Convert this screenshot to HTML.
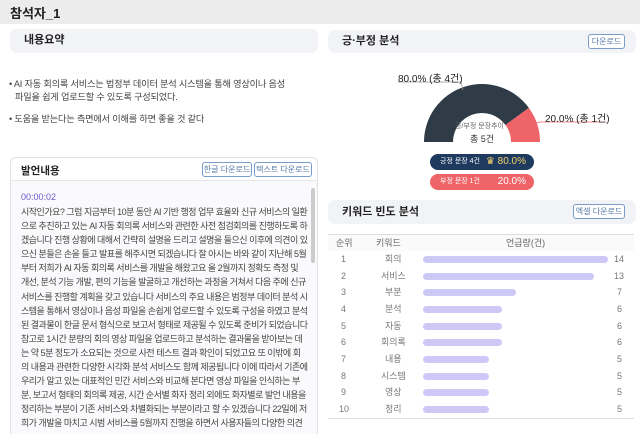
<!DOCTYPE html>
<html><head><meta charset="utf-8"><style>
*{margin:0;padding:0;box-sizing:border-box}
html,body{width:640px;height:434px;overflow:hidden}
body{background:#ececec;font-family:"Liberation Sans","Noto Sans CJK KR",sans-serif;color:#333;position:relative}
.abs{position:absolute}
.main{position:absolute;left:0;top:24px;width:640px;height:410px;background:#fff}
.hbox{position:absolute;background:#f2f3f6;border-radius:7px;font-size:11px;font-weight:bold;color:#222;padding-left:14px;line-height:23px}
.btn{position:absolute;border:1px solid #7a9cc8;border-radius:3px;background:#fff;color:#5577aa;font-size:8px;font-weight:normal;line-height:13px;text-align:center}
.t{font-size:9.2px;color:#444;white-space:nowrap;letter-spacing:-0.2px}
.sp{position:absolute;left:21px;top:205px;width:288px;height:229px;overflow:hidden;font-size:9px;letter-spacing:-0.5px;line-height:14.1px;color:#444;white-space:nowrap}
.row{position:absolute;left:328px;width:306px;height:17px;font-size:9px;color:#777;line-height:17px}
.row span{position:absolute;top:0}
.bar{position:absolute;left:95px;top:5px;height:7px;border-radius:4px;background:#cdc8f5}
</style></head><body>
<div class="abs" style="left:10px;top:3px;font-size:13px;font-weight:bold;color:#222">참석자_1</div>
<div class="main"></div>
<div class="hbox" style="left:10px;top:29px;width:308px;height:24px">내용요약</div>
<div class="abs t" style="left:9px;top:76px">• AI 자동 회의록 서비스는 법정부 데이터 분석 시스템을 통해 영상이나 음성</div>
<div class="abs t" style="left:15px;top:89px">파일을 쉽게 업로드할 수 있도록 구성되었다.</div>
<div class="abs t" style="left:9px;top:111px">• 도움을 받는다는 측면에서 이해를 하면 좋을 것 같다</div>
<div class="abs" style="left:10px;top:157px;width:308px;height:290px;border:1px solid #e2e2e6;border-radius:6px;background:#fafafc"></div>
<div class="abs" style="left:11px;top:158px;width:306px;height:23px;background:#fff;border-bottom:1px solid #e6e6ea;border-radius:6px 6px 0 0"></div>
<div class="abs" style="left:21px;top:163px;font-size:10.5px;font-weight:bold;color:#222">발언내용</div>
<div class="btn" style="left:202px;top:162px;width:50px;height:15px">한글 다운로드</div>
<div class="btn" style="left:254px;top:162px;width:58px;height:15px">텍스트 다운로드</div>
<div class="abs" style="left:311px;top:188px;width:4px;height:75px;background:#ccc;border-radius:2px"></div>
<div class="abs" style="left:21px;top:192px;font-size:9px;color:#6a5acd">00:00:02</div>
<div class="sp">시작인가요? 그럼 지금부터 10분 동안 AI 기반 행정 업무 효율와 신규 서비스의 일환<br>으로 추진하고 있는 AI 자동 회의록 서비스와 관련한 사전 점검회의를 진행하도록 하<br>겠습니다 진행 상황에 대해서 간략히 설명을 드리고 설명을 들으신 이후에 의견이 있<br>으신 분들은 손을 들고 발표를 해주시면 되겠습니다 잘 아시는 바와 같이 지난해 5월<br>부터 저희가 AI 자동 회의록 서비스를 개발을 해왔고요 올 2월까지 정확도 측정 및<br>개선, 분석 기능 개발, 편의 기능을 발굴하고 개선하는 과정을 거쳐서 다음 주에 신규<br>서비스를 진행할 계획을 갖고 있습니다 서비스의 주요 내용은 범정부 데이터 분석 시<br>스템을 통해서 영상이나 음성 파일을 손쉽게 업로드할 수 있도록 구성을 하였고 분석<br>된 결과물이 한글 문서 형식으로 보고서 형태로 제공될 수 있도록 준비가 되었습니다<br>참고로 1시간 분량의 회의 영상 파일을 업로드하고 분석하는 결과물을 받아보는 데<br>는 약 5분 정도가 소요되는 것으로 사전 테스트 결과 확인이 되었고요 또 이밖에 회<br>의 내용과 관련한 다양한 시각화 분석 서비스도 함께 제공됩니다 이에 따라서 기존에<br>우리가 알고 있는 대표적인 민간 서비스와 비교해 본다면 영상 파일을 인식하는 부<br>분, 보고서 형태의 회의록 제공, 시간 순서별 화자 정리 외에도 화자별로 발언 내용을<br>정리하는 부분이 기존 서비스와 차별화되는 부분이라고 할 수 있겠습니다 22일에 저<br>희가 개발을 마치고 시범 서비스를 5월까지 진행을 하면서 사용자들의 다양한 의견</div>

<div class="hbox" style="left:328px;top:30px;width:308px;height:23px">긍·부정 분석</div>
<div class="btn" style="left:588px;top:34px;width:37px;height:15px">다운로드</div>
<svg class="abs" style="left:0;top:0" width="640" height="200">
<path d="M424 142 A58 58 0 0 1 528.9 107.9 L505.5 125 A29 29 0 0 0 453 142 Z" fill="#2f3b47"/>
<path d="M528.9 107.9 A58 58 0 0 1 540 142 L511 142 A29 29 0 0 0 505.5 125 Z" fill="#ef6468"/>
<polyline points="398,82 461,82 463,90" fill="none" stroke="#999" stroke-width="0.7"/>
<polyline points="534,124 540,122 606,122" fill="none" stroke="#ef6468" stroke-width="0.7"/>
</svg>
<div class="abs" style="left:398px;top:70px;font-size:10px;color:#222">80.0% (총 4건)</div>
<div class="abs" style="left:545px;top:110px;font-size:10px;color:#222">20.0% (총 1건)</div>
<div class="abs" style="left:455px;top:121px;font-size:7px;color:#666">긍/부정 문장추이</div>
<div class="abs" style="left:470px;top:132px;font-size:9px;color:#333">총 5건</div>
<div class="abs" style="left:430px;top:154px;width:104px;height:16px;border-radius:8px;background:#1e3a5f;color:#fff;font-size:7px;line-height:16px;padding-left:10px">긍정 문장 4건<span style="position:absolute;right:8px;top:0;font-size:10px;color:#f5d26b">♛ 80.0%</span></div>
<div class="abs" style="left:430px;top:174px;width:104px;height:16px;border-radius:8px;background:#ef6468;color:#fff;font-size:7px;line-height:16px;padding-left:10px">부정 문장 1건<span style="position:absolute;right:8px;top:0;font-size:10px;color:#fff">20.0%</span></div>

<div class="hbox" style="left:328px;top:200px;width:308px;height:24px;line-height:24px">키워드 빈도 분석</div>
<div class="btn" style="left:573px;top:204px;width:52px;height:15px">엑셀 다운로드</div>
<div class="abs" style="left:328px;top:234px;width:306px;height:17px;border-top:1px solid #ddd;background:#fafafa;font-size:9px;color:#666;line-height:17px">
<span class="abs" style="left:8px;top:0">순위</span><span class="abs" style="left:48px;top:0">키워드</span><span class="abs" style="left:178px;top:0">언급량(건)</span></div>
<div class="row" style="top:251px"><span style="left:13px">1</span><span style="left:57px">회의</span><div class="bar" style="width:185px"></div><span style="left:286px">14</span></div>
<div class="row" style="top:268px"><span style="left:13px">2</span><span style="left:53px">서비스</span><div class="bar" style="width:171px"></div><span style="left:286px">13</span></div>
<div class="row" style="top:284px"><span style="left:13px">3</span><span style="left:57px">부분</span><div class="bar" style="width:93px"></div><span style="left:289px">7</span></div>
<div class="row" style="top:301px"><span style="left:13px">4</span><span style="left:57px">분석</span><div class="bar" style="width:79px"></div><span style="left:289px">6</span></div>
<div class="row" style="top:318px"><span style="left:13px">5</span><span style="left:57px">자동</span><div class="bar" style="width:79px"></div><span style="left:289px">6</span></div>
<div class="row" style="top:334px"><span style="left:13px">6</span><span style="left:53px">회의록</span><div class="bar" style="width:79px"></div><span style="left:289px">6</span></div>
<div class="row" style="top:351px"><span style="left:13px">7</span><span style="left:57px">내용</span><div class="bar" style="width:66px"></div><span style="left:289px">5</span></div>
<div class="row" style="top:368px"><span style="left:13px">8</span><span style="left:53px">시스템</span><div class="bar" style="width:66px"></div><span style="left:289px">5</span></div>
<div class="row" style="top:384px"><span style="left:13px">9</span><span style="left:57px">영상</span><div class="bar" style="width:66px"></div><span style="left:289px">5</span></div>
<div class="row" style="top:401px"><span style="left:11px">10</span><span style="left:57px">정리</span><div class="bar" style="width:66px"></div><span style="left:289px">5</span></div>
<div class="abs" style="left:328px;top:418px;width:306px;height:1px;background:#ddd"></div>
</body></html>
